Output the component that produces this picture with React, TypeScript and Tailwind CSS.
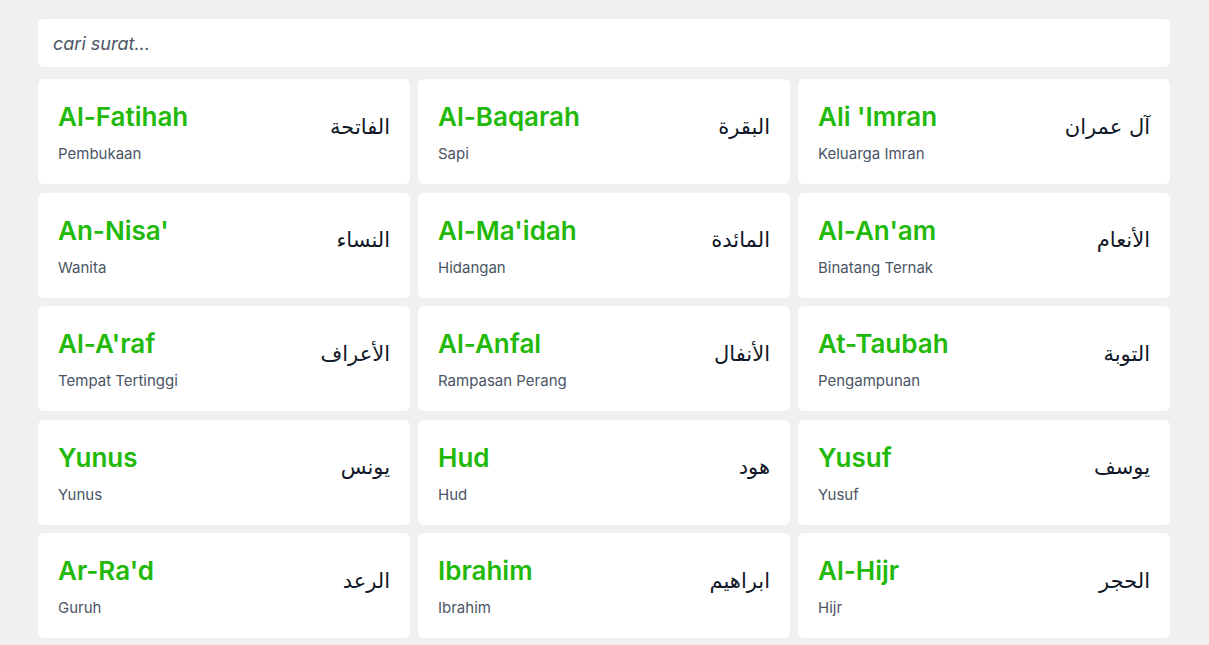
const surat = [
  { name: "Al-Fatihah", arti: "Pembukaan", arab: "الفاتحة" },
  { name: "Al-Baqarah", arti: "Sapi", arab: "البقرة" },
  { name: "Ali 'Imran", arti: "Keluarga Imran", arab: "آل عمران" },
  { name: "An-Nisa'", arti: "Wanita", arab: "النساء" },
  { name: "Al-Ma'idah", arti: "Hidangan", arab: "المائدة" },
  { name: "Al-An'am", arti: "Binatang Ternak", arab: "الأنعام" },
  { name: "Al-A'raf", arti: "Tempat Tertinggi", arab: "الأعراف" },
  { name: "Al-Anfal", arti: "Rampasan Perang", arab: "الأنفال" },
  { name: "At-Taubah", arti: "Pengampunan", arab: "التوبة" },
  { name: "Yunus", arti: "Yunus", arab: "يونس" },
  { name: "Hud", arti: "Hud", arab: "هود" },
  { name: "Yusuf", arti: "Yusuf", arab: "يوسف" },
  { name: "Ar-Ra'd", arti: "Guruh", arab: "الرعد" },
  { name: "Ibrahim", arti: "Ibrahim", arab: "ابراهيم" },
  { name: "Al-Hijr", arti: "Hijr", arab: "الحجر" },
]

export default function App() {
  return (
    <div className="min-h-screen bg-[#f0f0f0] font-['Inter',sans-serif]">
      <div className="ml-[38px] w-[1132px] pt-[19px] pb-6">
        <input
          type="text"
          placeholder="cari surat..."
          className="block h-12 w-full rounded-md bg-white px-[15px] text-lg italic text-gray-700 outline-none placeholder:text-gray-600"
        />
        <div className="mt-3 grid grid-cols-3 gap-x-2 gap-y-[8.5px]">
          {surat.map((s) => (
            <div key={s.name} className="flex items-center justify-between rounded-md bg-white px-5 py-5">
              <div>
                <div className="text-[26px] font-semibold leading-9 text-[#22b90a]">{s.name}</div>
                <div className="mt-[9px] text-[15px] leading-5 text-gray-600">{s.arti}</div>
              </div>
              <div dir="rtl" className="-mt-2 font-['DejaVu_Sans',sans-serif] text-[21px] text-gray-900">
                {s.arab}
              </div>
            </div>
          ))}
        </div>
      </div>
    </div>
  )
}
